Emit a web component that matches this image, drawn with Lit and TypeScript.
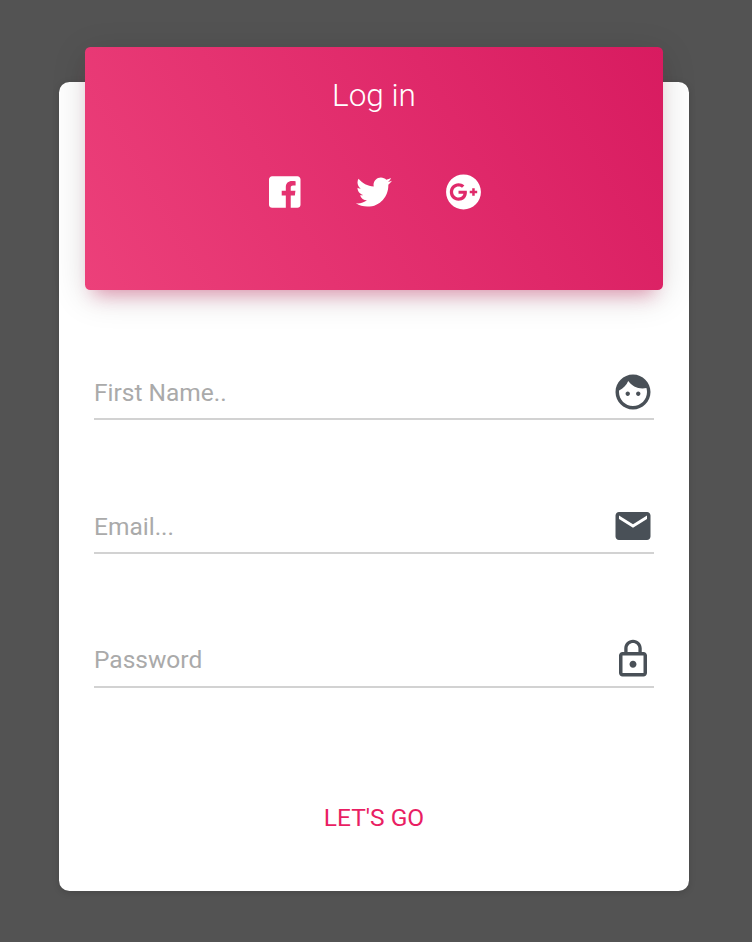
import { LitElement, html, css, svg } from "lit";
import { customElement, property } from "lit/decorators.js";

type Glyph = { viewBox: string; width: number; height: number; path: string };

const glyphs: Record<string, Glyph> = {
  facebook: {
    viewBox: "0 0 448 512", width: 31.5, height: 36,
    path: "M448 76v360c0 24-20 44-44 44H309.1V306.5h58.2l8.7-67.6h-67v-43.2c0-19.6 5.4-32.9 33.5-32.9h35.8v-60.5c-6.2-.8-27.4-2.7-52.2-2.7-51.6 0-87 31.5-87 89.4v49.9h-58.4v67.6h58.4V480H44c-24 0-44-20-44-44V76c0-24 20-44 44-44h360c24 0 44 20 44 44z",
  },
  twitter: {
    viewBox: "0 0 512 512", width: 36, height: 36,
    path: "M459.37 151.716c.325 4.548.325 9.097.325 13.645 0 138.72-105.583 298.558-298.558 298.558-59.452 0-114.68-17.219-161.137-47.106 8.447.974 16.568 1.299 25.34 1.299 49.055 0 94.213-16.568 130.274-44.832-46.132-.975-84.792-31.188-98.112-72.772 6.498.974 12.995 1.624 19.818 1.624 9.421 0 18.843-1.3 27.614-3.573-48.081-9.747-84.143-51.98-84.143-102.985v-1.299c13.969 7.797 30.214 12.67 47.431 13.319-28.264-18.843-46.781-51.005-46.781-87.391 0-19.492 5.197-37.36 14.294-52.954 51.655 63.675 129.3 105.258 216.365 109.807-1.624-7.797-2.599-15.918-2.599-24.04 0-57.828 46.782-104.934 104.934-104.934 30.213 0 57.502 12.67 76.67 33.137 23.715-4.548 46.456-13.32 66.599-25.34-7.798 24.366-24.366 44.833-46.132 57.827 21.117-2.273 41.584-8.122 60.426-16.243-14.292 20.791-32.161 39.308-52.628 54.253z",
  },
  googlePlus: {
    viewBox: "0 0 496 512", width: 35, height: 36,
    path: "M248 8C111.1 8 0 119.1 0 256s111.1 248 248 248 248-111.1 248-248S384.9 8 248 8zm-70.7 372c-68.8 0-124-55.5-124-124s55.2-124 124-124c31.3 0 60.1 11 83 32.3l-33.6 32.6c-13.2-12.9-31.3-19.1-49.4-19.1-42.9 0-77.2 35.5-77.2 78.1s34.2 78.1 77.2 78.1c32.6 0 64.9-19.1 70.1-53.3h-70.1v-42.6h116.9c1.3 6.8 1.9 13.6 1.9 20.7 0 70.8-47.5 121.2-118.8 121.2zm230.2-106.2v35.5H372v-35.5h-35.5v-35.5H372v-35.5h35.5v35.5h35.2v35.5h-35.2z",
  },
  face: {
    viewBox: "0 0 24 24", width: 42, height: 42,
    path: "M9 11.75c-.69 0-1.25.56-1.25 1.25s.56 1.25 1.25 1.25 1.25-.56 1.25-1.25-.56-1.25-1.25-1.25zm6 0c-.69 0-1.25.56-1.25 1.25s.56 1.25 1.25 1.25 1.25-.56 1.25-1.25-.56-1.25-1.25-1.25zM12 2C6.48 2 2 6.48 2 12s4.48 10 10 10 10-4.48 10-10S17.52 2 12 2zm0 18c-4.41 0-8-3.59-8-8 0-.29.02-.58.05-.86 2.36-1.05 4.23-2.98 5.21-5.37C11.07 8.33 14.05 10 17.42 10c.78 0 1.53-.09 2.25-.26.21.71.33 1.47.33 2.26 0 4.41-3.59 8-8 8z",
  },
  mail: {
    viewBox: "0 0 24 24", width: 42, height: 42,
    path: "M20 4H4c-1.1 0-1.99.9-1.99 2L2 18c0 1.1.9 2 2 2h16c1.1 0 2-.9 2-2V6c0-1.1-.9-2-2-2zm0 4l-8 5-8-5V6l8 5 8-5v2z",
  },
  lock: {
    viewBox: "0 0 24 24", width: 42, height: 42,
    path: "M12 17c1.1 0 2-.9 2-2s-.9-2-2-2-2 .9-2 2 .9 2 2 2zm6-9h-1V6c0-2.76-2.24-5-5-5S7 3.24 7 6v2H6c-1.1 0-2 .9-2 2v10c0 1.1.9 2 2 2h12c1.1 0 2-.9 2-2V10c0-1.1-.9-2-2-2zM8.9 6c0-1.71 1.39-3.1 3.1-3.1s3.1 1.39 3.1 3.1v2H8.9V6zM18 20H6V10h12v10z",
  },
};

@customElement("ui-icon")
export class UiIcon extends LitElement {
  @property() name = "face";

  static styles = css`
    :host { display: block; flex: none; }
    .glyph { display: block; fill: currentColor; }
  `;

  render() {
    const g = glyphs[this.name];
    return html`<svg class="glyph" width=${g.width} height=${g.height} viewBox=${g.viewBox} aria-hidden="true">
      ${svg`<path d=${g.path}></path>`}
    </svg>`;
  }
}

@customElement("login-field")
export class LoginField extends LitElement {
  @property() placeholder = "";
  @property() icon = "";
  @property() type = "text";

  static styles = css`
    :host { display: block; }
    .field {
      display: flex;
      align-items: center;
      box-sizing: border-box;
      height: 54px;
      padding-bottom: var(--field-inset, 0);
      border-bottom: 2px solid #d2d2d2;
    }
    .input {
      flex: 1;
      min-width: 0;
      height: 52px;
      padding: 0;
      border: 0;
      outline: 0;
      background: none;
      font: 400 24.5px/36px Roboto, sans-serif;
      color: #495057;
    }
    .input::placeholder { color: #aaa; opacity: 1; }
    .icon { color: #495057; }
  `;

  render() {
    return html`<label class="field">
      <input class="input" type=${this.type} placeholder=${this.placeholder} />
      <ui-icon class="icon" name=${this.icon}></ui-icon>
    </label>`;
  }
}

@customElement("app-root")
export class AppRoot extends LitElement {
  static styles = css`
    :host {
      display: block;
      box-sizing: border-box;
      height: 942px;
      padding: 82px 63px 0 59px;
      background: #535353;
      font-family: Roboto, sans-serif;
      overflow: hidden;
    }
    .card {
      display: flex;
      flex-direction: column;
      box-sizing: border-box;
      height: 809px;
      border-radius: 10.5px;
      background: #fff;
      box-shadow: 0 1.75px 7px 0 rgba(0, 0, 0, 0.14);
    }
    .header {
      display: flex;
      flex-direction: column;
      align-items: center;
      box-sizing: border-box;
      height: 243px;
      margin: -35px 26px 0;
      padding-top: 27px;
      border-radius: 5.25px;
      background: linear-gradient(60deg, #ec407a, #d81b60);
      box-shadow: 0 7px 35px 0 rgba(0, 0, 0, 0.14),
        0 12.25px 17.5px -8.75px rgba(233, 30, 99, 0.4);
      color: #fff;
    }
    .title {
      margin: 0;
      font-size: 31.5px;
      line-height: 44px;
      font-weight: 300;
    }
    .social {
      display: flex;
      align-items: center;
      gap: 54.5px;
      margin-top: 56px;
      padding-left: 2px;
    }
    .bird {
      margin: 0 -0.5px 0 1px;
    }
    .fields {
      display: flex;
      flex-direction: column;
      gap: 80px;
      padding: 76px 35px 0;
    }
    .password {
      --field-inset: 2px;
    }
    .submit {
      align-self: center;
      margin-top: 106px;
      padding: 6px 12px;
      border: 0;
      background: none;
      font: 400 24.5px/36px Roboto, sans-serif;
      color: #e91e63;
      text-transform: uppercase;
    }
  `;

  render() {
    return html`<form class="card" @submit=${(e: Event) => e.preventDefault()}>
      <header class="header">
        <h1 class="title">Log in</h1>
        <nav class="social">
          <ui-icon name="facebook"></ui-icon>
          <ui-icon class="bird" name="twitter"></ui-icon>
          <ui-icon name="googlePlus"></ui-icon>
        </nav>
      </header>
      <div class="fields">
        <login-field placeholder="First Name.." icon="face"></login-field>
        <login-field placeholder="Email..." icon="mail"></login-field>
        <login-field class="password" placeholder="Password" icon="lock" type="password"></login-field>
      </div>
      <button class="submit">Let's go</button>
    </form>`;
  }
}
